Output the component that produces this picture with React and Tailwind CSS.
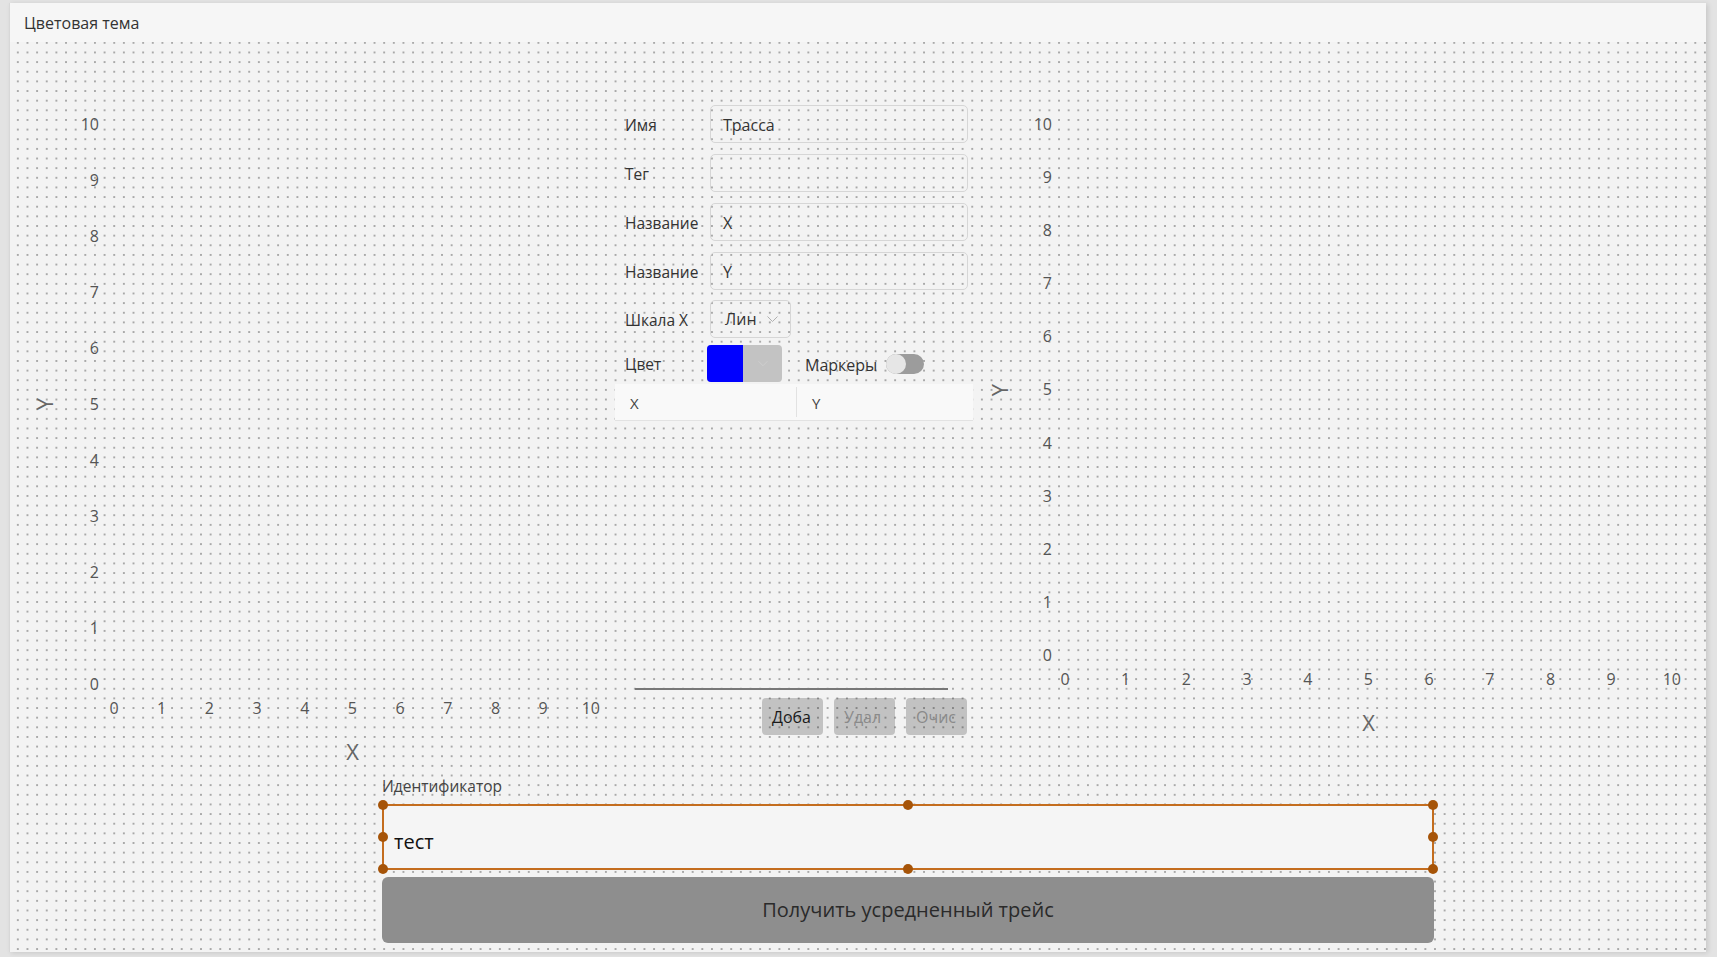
import React from 'react';

const yTicks = ['10', '9', '8', '7', '6', '5', '4', '3', '2', '1', '0'];
const xTicks = ['0', '1', '2', '3', '4', '5', '6', '7', '8', '9', '10'];

const dots =
  'bg-[#f3f3f3] bg-[radial-gradient(circle,#a9a9a9_1.1px,transparent_1.5px)] bg-size-[9.65px_9.65px] bg-position-[3px_-4px]';

const Chart = ({ titleW, labelsW, colH, rowMl, rowW }) => (
  <div className="flex flex-col pt-[72px]">
    <div className={`flex ${colH}`}>
      <div className={`${titleW} flex items-center justify-center`}>
        <span className="-rotate-90 text-[22px] leading-[28px] text-[#666]">Y</span>
      </div>
      <div className={`${labelsW} flex flex-col justify-between text-right`}>
        {yTicks.map((t) => (
          <div key={t} className="h-[20px] leading-[20px] text-[16px] text-[#555]">
            {t}
          </div>
        ))}
      </div>
    </div>
    <div className={`${rowMl} ${rowW} mt-[4px] flex justify-between`}>
      {xTicks.map((t) => (
        <div key={t} className="w-[24px] h-[20px] leading-[20px] text-center text-[16px] text-[#555]">
          {t}
        </div>
      ))}
    </div>
    <div className={`${rowMl} ${rowW} mt-[19px] h-[28px] leading-[28px] text-center text-[22px] text-[#666]`}>
      X
    </div>
  </div>
);

const Field = ({ label, value, className = '' }) => (
  <div className={`flex items-center h-[38px] ${className}`}>
    <div className="w-[95px] pl-[10px] pt-[3px] text-[15.5px] text-[#333]">{label}</div>
    <div className="w-[258px] h-[38px] border border-[#d6d6d6] rounded-[5px] flex items-center pl-[12px] pt-[2px] text-[16px] text-[#333]">
      {value}
    </div>
  </div>
);

const Chevron = ({ className }) => (
  <svg viewBox="0 0 12 8" className={className} fill="none" stroke="currentColor" strokeWidth="1">
    <path d="M1 1.5 L6 6.5 L11 1.5" />
  </svg>
);

const SmallButton = ({ text, dim }) => (
  <div className="w-[61px] h-[37px] rounded-[4px] bg-black/20 flex items-center pl-[10px]">
    <div className={`whitespace-nowrap text-[16px] ${dim ? 'text-[#8a8a8a]' : 'text-[#1a1a1a]'}`}>{text}</div>
  </div>
);

const Handle = ({ className }) => (
  <div className={`absolute w-[10px] h-[10px] rounded-full bg-[#a65408] -translate-x-1/2 -translate-y-1/2 ${className}`} />
);

export default function App() {
  return (
    <div className="w-[1717px] h-[957px] bg-[#e3e3e3] pt-[3px] pl-[9px] font-['Open_Sans','Noto_Sans',sans-serif] overflow-hidden">
      <div className="w-[1697px] h-[949px] flex flex-col shadow-[2px_1px_5px_rgba(0,0,0,0.12)] border-l border-[#d8d8d8]">
        {/* Header */}
        <div className="h-[39px] bg-[#f6f6f6] flex items-center pl-[14px] text-[16px] text-[#333]">
          Цветовая тема
        </div>

        {/* Body */}
        <div className={`flex-1 flex flex-col ${dots}`}>
          <div className="h-[732px] flex">
            {/* Left chart */}
            <div className="w-[605px] shrink-0">
              <Chart titleW="w-[69px]" labelsW="w-[20px]" colH="h-[580px]" rowMl="ml-[92px]" rowW="w-[501px]" />
            </div>

            {/* Form */}
            <div className="w-[358px] shrink-0 pt-[63px] flex flex-col">
              <Field label="Имя" value="Трасса" />
              <Field label="Тег" value="" className="mt-[11px]" />
              <Field label="Название" value="X" className="mt-[11px]" />
              <Field label="Название" value="Y" className="mt-[11px]" />

              <div className="flex items-center h-[38px] mt-[10px]">
                <div className="w-[95px] pl-[10px] pt-[3px] text-[15.5px] text-[#333]">Шкала X</div>
                <div className="w-[81px] h-[38px] border border-[#d6d6d6] rounded-[5px] flex items-center pl-[14px] text-[16px] text-[#333]">
                  <div className="w-[30px] whitespace-nowrap">Лин</div>
                  <Chevron className="w-[13px] h-[8px] ml-[11px] text-[#b0b0b0]" />
                </div>
              </div>

              <div className="flex items-center h-[37px] mt-[7px]">
                <div className="w-[92px] pl-[10px] pt-[3px] text-[15.5px] text-[#333]">Цвет</div>
                <div className="w-[75px] h-[37px] rounded-[4px] overflow-hidden flex bg-[#c3c3c3]">
                  <div className="w-[36px] h-full bg-[#0000ff]" />
                  <div className="flex-1 flex items-center justify-center">
                    <Chevron className="w-[12px] h-[7px] text-[#d0d0d0]" />
                  </div>
                </div>
                <div className="ml-[23px] pt-[2px] text-[16px] text-[#333]">Маркеры</div>
                <div className="ml-[9px] w-[38px] h-[20px] rounded-full bg-[#9c9c9c] flex items-center">
                  <div className="w-[20px] h-[20px] rounded-full bg-[#e6e6e6]" />
                </div>
              </div>

              {/* Table header */}
              <div className="mt-[2px] h-[37px] bg-[#f9f9f9] flex border-b border-[#e2e2e2] text-[15px] text-[#444]">
                <div className="w-[182px] flex items-center pl-[15px] pt-[2px] border-r border-[#e2e2e2] my-[3px]">X</div>
                <div className="flex-1 flex items-center pl-[15px] pt-[2px]">Y</div>
              </div>

              <div className="mt-[267px] ml-[20px] w-[313px] h-[2px] bg-[#777]" />

              <div className="mt-[8px] flex justify-end gap-[11px] pr-[6px]">
                <SmallButton text="Доба" />
                <SmallButton text="Удал" dim />
                <SmallButton text="Очис" dim />
              </div>
            </div>

            {/* Right chart */}
            <div className="flex-1">
              <Chart titleW="w-[52px]" labelsW="w-[27px]" colH="h-[551px]" rowMl="ml-[80px]" rowW="w-[631px]" />
            </div>
          </div>

          {/* Bottom */}
          <div className="ml-[372px] w-[1052px] flex flex-col">
            <div className="h-[24px] leading-[24px] text-[15.5px] text-[#444]">Идентификатор</div>
            <div className="relative mt-[6px] h-[66px] border-2 border-[#c46d1e] bg-[#f5f5f5] flex items-center pl-[10px] pt-[9px] text-[20px] text-[#111]">
              тест
              <Handle className="left-[-1px] top-[-1px]" />
              <Handle className="left-1/2 top-[-1px]" />
              <Handle className="left-[calc(100%+1px)] top-[-1px]" />
              <Handle className="left-[-1px] top-1/2" />
              <Handle className="left-[calc(100%+1px)] top-1/2" />
              <Handle className="left-[-1px] top-[calc(100%+1px)]" />
              <Handle className="left-1/2 top-[calc(100%+1px)]" />
              <Handle className="left-[calc(100%+1px)] top-[calc(100%+1px)]" />
            </div>
            <div className="mt-[7px] h-[66px] rounded-[6px] bg-[#8e8e8e] flex items-center justify-center text-[20px] text-[#2a2a2a]">
              Получить усредненный трейс
            </div>
          </div>
        </div>
      </div>
    </div>
  );
}
